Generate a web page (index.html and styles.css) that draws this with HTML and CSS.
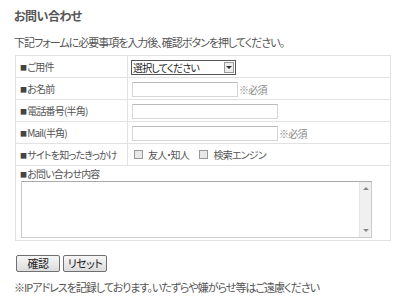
FILE: index.html
```html
<!DOCTYPE html>
<html lang="ja">
<head>
    <meta charset="UTF-8">
    <meta name="viewport" content="width=device-width, initial-scale=1.0">
    <title>お問い合わせ</title>
    <link rel="stylesheet" href="styles.css">
</head>
<body>
    <h2 class="title">お問い合わせ</h2>
    <p class="lead">下記フォームに必要事項を入力後、確認ボタンを押してください。</p>

    <form class="contact">
        <table class="form-table">
            <tr>
                <th><span class="mark">■</span>ご用件</th>
                <td>
                    <span class="select-box">
                        <select>
                            <option>選択してください</option>
                        </select>
                        <span class="select-arrow"><span class="tri"></span></span>
                    </span>
                </td>
            </tr>
            <tr>
                <th><span class="mark">■</span>お名前</th>
                <td><input type="text" class="field short"><span class="req">※必須</span></td>
            </tr>
            <tr>
                <th><span class="mark">■</span>電話番号(半角)</th>
                <td><input type="text" class="field long"></td>
            </tr>
            <tr>
                <th><span class="mark">■</span>Mail(半角)</th>
                <td><input type="text" class="field long"><span class="req">※必須</span></td>
            </tr>
            <tr>
                <th><span class="mark">■</span>サイトを知ったきっかけ</th>
                <td class="checks">
                    <label><input type="checkbox" class="check">友人・知人</label>
                    <label><input type="checkbox" class="check">検索エンジン</label>
                </td>
            </tr>
            <tr>
                <td colspan="2" class="body-cell">
                    <div class="body-label"><span class="mark">■</span>お問い合わせ内容</div>
                    <div class="area-wrap">
                        <textarea class="area"></textarea>
                        <div class="scrollbar">
                            <span class="up"></span>
                            <span class="down"></span>
                        </div>
                    </div>
                </td>
            </tr>
        </table>

        <div class="buttons">
            <button type="button" class="btn">確認</button>
            <button type="reset" class="btn">リセット</button>
        </div>
    </form>

    <p class="note">※IPアドレスを記録しております。いたずらや嫌がらせ等はご遠慮ください</p>
</body>
</html>
```

FILE: styles.css
```css
body {
    margin: 0;
    padding: 0 14px;
    background-color: #fff;
    color: #555;
    font-family: "Noto Sans CJK JP", "Liberation Sans", sans-serif;
    font-feature-settings: "palt";
    font-size: 11px;
    letter-spacing: -1px;
}
.title {
    margin: 0;
    padding-top: 8px;
    font-size: 12px;
    font-weight: bold;
    letter-spacing: -0.5px;
    color: #555;
    line-height: 16px;
}
.lead {
    margin: 10px 0 0;
    line-height: 16px;
}
.form-table {
    margin: 5px 0 0 1px;
    width: 376px;
    border-collapse: collapse;
    border: 1px solid #ddd;
    table-layout: fixed;
}
.form-table th,
.form-table td {
    border: 1px solid #e2e2e2;
    height: 21px;
    padding: 0 3px;
    font-weight: normal;
    font-size: 10px;
    letter-spacing: -0.8px;
    text-align: left;
    vertical-align: middle;
    white-space: nowrap;
}
.form-table th {
    width: 104px;
    padding-left: 4px;
}
.mark {
    font-size: 7px;
    color: #444;
    margin-right: 1px;
    vertical-align: 1px;
}
.select-box {
    display: inline-flex;
    align-items: stretch;
    height: 13px;
    border: 1px solid #555;
    background-color: #fff;
    vertical-align: middle;
}
.select-box select {
    appearance: none;
    -webkit-appearance: none;
    border: none;
    outline: none;
    padding: 0 0 0 1px;
    margin: 0;
    width: 91px;
    height: 13px;
    font: inherit;
    font-size: 10px;
    line-height: 13px;
    letter-spacing: -0.8px;
    color: #222;
    background: none;
}
.select-arrow {
    display: flex;
    align-items: center;
    justify-content: center;
    width: 8px;
    margin: 1px;
    border: 1px solid #999;
    background-color: #eee;
}
.tri {
    width: 0;
    height: 0;
    border-left: 3px solid transparent;
    border-right: 3px solid transparent;
    border-top: 3px solid #333;
}
.field {
    box-sizing: border-box;
    height: 15px;
    border: 1px solid #d6d6d6;
    border-top-color: #bbb;
    padding: 0 2px;
    margin: 0 0 0 1px;
    vertical-align: middle;
}
.field.short {
    width: 106px;
}
.field.long {
    width: 146px;
}
.req {
    margin-left: 1px;
    color: #888;
    font-size: 10px;
    vertical-align: middle;
}
.checks label {
    display: inline-flex;
    align-items: center;
    margin-right: 6px;
}
.check {
    appearance: none;
    -webkit-appearance: none;
    width: 9px;
    height: 9px;
    margin: 0 5px 0 3px;
    border: 1px solid #999;
    background-color: #e8e8e8;
}
.form-table .body-cell {
    height: auto;
    padding: 1px 4px 2px;
}
.body-label {
    line-height: 13px;
}
.area-wrap {
    display: flex;
    width: 349px;
    height: 55px;
    margin-left: 1px;
    border: 1px solid #ccc;
    border-top-color: #aaa;
}
.area {
    flex: 1;
    border: none;
    resize: none;
    outline: none;
    padding: 2px;
    margin: 0;
}
.scrollbar {
    display: flex;
    flex-direction: column;
    justify-content: space-between;
    align-items: center;
    width: 11px;
    padding: 5px 0;
    border-left: 1px solid #e4e4e4;
    background-color: #f0f0f0;
}
.scrollbar .up {
    border-left: 3px solid transparent;
    border-right: 3px solid transparent;
    border-bottom: 3px solid #888;
}
.scrollbar .down {
    border-left: 3px solid transparent;
    border-right: 3px solid transparent;
    border-top: 3px solid #888;
}
.buttons {
    display: flex;
    gap: 3px;
    margin: 14px 0 0 2px;
}
.btn {
    width: 44px;
    height: 17px;
    padding: 0;
    border: 1px solid #707070;
    border-radius: 2px;
    background: linear-gradient(#f6f6f6, #dcdcdc);
    font: inherit;
    font-size: 11px;
    letter-spacing: -0.5px;
    color: #222;
    line-height: 15px;
}
.note {
    margin: 7px 0 0;
    line-height: 16px;
}
```
